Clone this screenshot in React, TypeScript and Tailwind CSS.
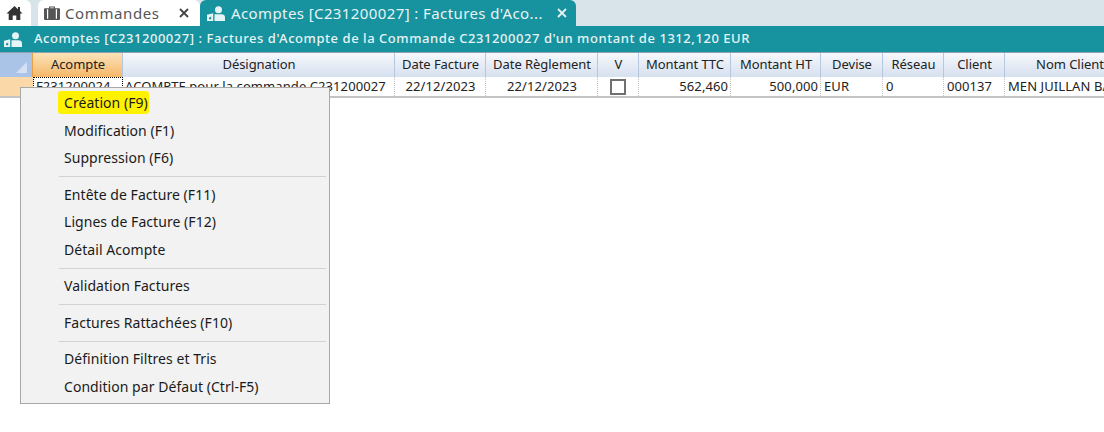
const columns = [
  { label: 'Acompte', width: 'w-[90px]', active: true },
  { label: 'Désignation', width: 'w-[272px]' },
  { label: 'Date Facture', width: 'w-[91px]' },
  { label: 'Date Règlement', width: 'w-[112px]' },
  { label: 'V', width: 'w-[41px]' },
  { label: 'Montant TTC', width: 'w-[92px]' },
  { label: 'Montant HT', width: 'w-[90px]' },
  { label: 'Devise', width: 'w-[62px]' },
  { label: 'Réseau', width: 'w-[61px]' },
  { label: 'Client', width: 'w-[61px]' },
  { label: 'Nom Client', width: 'w-[130px]' },
]

const menuGroups = [
  ['Création (F9)', 'Modification (F1)', 'Suppression (F6)'],
  ['Entête de Facture (F11)', 'Lignes de Facture (F12)', 'Détail Acompte'],
  ['Validation Factures'],
  ['Factures Rattachées (F10)'],
  ['Définition Filtres et Tris', 'Condition par Défaut (Ctrl-F5)'],
]

const PersonIcon = ({ className }: { className: string }) => (
  <svg viewBox="0 0 18 15" className={className} fill="currentColor">
    <circle cx="11.5" cy="3.7" r="3.5" />
    <path d="M7.5 8.2h7.2c1.9 0 3.3 1.3 3.3 3V15H7.5z" />
    <path d="M0 8.8 6.2 7.2V15H0z" />
    <path d="M2 11.8 4.2 10.6v2.6H2z" fill="#17929f" />
  </svg>
)

const CloseIcon = () => (
  <svg viewBox="0 0 10 10" className="h-[10px] w-[10px]" stroke="currentColor" strokeWidth="1.8">
    <path d="m1 1 8 8M9 1l-8 8" />
  </svg>
)

const Cell = ({ width, className, children }: { width: string; className?: string; children?: React.ReactNode }) => (
  <div className={`${width} flex h-full shrink-0 items-center overflow-hidden whitespace-nowrap border-r border-dotted border-[#c4c4c4] ${className ?? ''}`}>
    {children}
  </div>
)

export default function App() {
  return (
    <div className="relative h-[432px] w-[1104px] overflow-hidden bg-white font-['Noto_Sans',sans-serif] text-[13px] tracking-[0.08px] text-[#222]">
      {/* onglets */}
      <div className="flex h-[26px] items-end bg-[#d9e3ea]">
        <div className="flex h-[26px] w-[31px] items-center justify-center rounded-tr-md bg-white pr-[3px] text-[#333]">
          <svg viewBox="0 0 16 14" className="h-[14px] w-[17px]" fill="currentColor">
            <path d="M8 0 0 7.5h2.2V14h4V9.5h3.6V14h4V7.5H16l-2.5-2.4V1h-2v2.2z" />
          </svg>
        </div>
        <div className="ml-[7px] flex h-[26px] w-[162px] items-center rounded-t-md bg-white pl-[6px] text-[#555]">
          <svg viewBox="0 0 16 14" className="h-[14px] w-[16px]" fill="currentColor">
            <path d="M5 2.2V.6h6v1.6h4.2c.5 0 .8.3.8.8v10.2c0 .5-.3.8-.8.8H.8c-.5 0-.8-.3-.8-.8V3c0-.5.3-.8.8-.8zM6.2 2.2h3.6v-.6H6.2zM3 3.2v9.6h1.2V3.2zm8.8 0v9.6H13V3.2z" />
          </svg>
          <span className="ml-[5px] text-[15px] tracking-[0.6px]">Commandes</span>
          <span className="ml-auto mr-[11px] text-[#444]">
            <CloseIcon />
          </span>
        </div>
        <div className="flex h-[26px] w-[376px] items-center rounded-t-md bg-[#17929f] pl-[7px] text-[#e6f4f5]">
          <PersonIcon className="h-[15px] w-[18px]" />
          <span className="ml-[6px] text-[15px] tracking-[0.4px]">Acomptes [C231200027] : Factures d'Aco...</span>
          <span className="ml-auto mr-[9px]">
            <CloseIcon />
          </span>
        </div>
      </div>

      {/* titre */}
      <div className="flex h-[26px] items-center bg-[#17929f] pl-[4px] text-[#e6f4f5]">
        <PersonIcon className="h-[15px] w-[18px]" />
        <span className="ml-[12px] text-[13px] font-medium tracking-[0.55px]">
          Acomptes [C231200027] : Factures d'Acompte de la Commande C231200027 d'un montant de 1312,120 EUR
        </span>
      </div>

      {/* entête de colonnes */}
      <div className="flex h-[25px] border-t border-[#8fa0b0] bg-gradient-to-b from-[#f6f8fc] to-[#d6e0ef]">
        <div className="relative h-full w-[33px] shrink-0 border-r border-[#e8a040] bg-[#a9c4e6]">
          <div className="absolute right-[5px] bottom-[4px] h-0 w-0 border-b-[11px] border-l-[11px] border-b-[#d5e1f2] border-l-transparent" />
        </div>
        {columns.map((col) => (
          <div
            key={col.label}
            className={`${col.width} flex h-full shrink-0 items-center justify-center whitespace-nowrap border-r border-[#b5c8de] pl-[1px] tracking-[-0.05px] ${col.active ? 'bg-gradient-to-b from-[#fbe3b8] to-[#f5b767]' : ''}`}
          >
            {col.label}
          </div>
        ))}
      </div>

      {/* ligne */}
      <div className="flex h-[21px] border-b-2 border-[#c4c4c4]">
        <div className="h-full w-[33px] shrink-0 bg-[#fbd8a8]" />
        <Cell width="w-[90px]" className="border-[1.5px] border-black pl-[2px]">F231200024</Cell>
        <Cell width="w-[272px]" className="pl-[2px]">ACOMPTE pour la commande C231200027</Cell>
        <Cell width="w-[91px]" className="justify-center pl-[1px]">22/12/2023</Cell>
        <Cell width="w-[112px]" className="justify-center pl-[1px]">22/12/2023</Cell>
        <Cell width="w-[41px]" className="justify-center">
          <div className="h-[16px] w-[16px] border-2 border-[#707070] bg-white" />
        </Cell>
        <Cell width="w-[92px]" className="justify-end pr-[2px]">562,460</Cell>
        <Cell width="w-[90px]" className="justify-end pr-[2px]">500,000</Cell>
        <Cell width="w-[62px]" className="pl-[3px]">EUR</Cell>
        <Cell width="w-[61px]" className="pl-[3px]">0</Cell>
        <Cell width="w-[61px]" className="pl-[3px]">000137</Cell>
        <Cell width="w-[130px]" className="pl-[3px]">MEN JUILLAN BAT</Cell>
      </div>

      {/* menu contextuel */}
      <div className="absolute top-[87px] left-[20px] h-[317px] w-[310px] border border-[#a8a8a8] bg-[#f2f2f2] py-[1.75px] text-[14px] tracking-[0.05px] text-[#1a1a1a]">
        {menuGroups.map((group, i) => (
          <div key={i}>
            {i > 0 && <div className="my-[4px] ml-[38px] mr-[3px] h-px bg-[#d2d2d2]" />}
            {group.map((item) => (
              <div key={item} className="flex h-[27.5px] items-center pb-[2px] pl-[43px]">
                <span className={item === 'Création (F9)' ? '-ml-[6px] rounded-[3px] bg-[#fff200] py-px pl-[6px] pr-[1px]' : ''}>{item}</span>
              </div>
            ))}
          </div>
        ))}
      </div>
    </div>
  )
}
